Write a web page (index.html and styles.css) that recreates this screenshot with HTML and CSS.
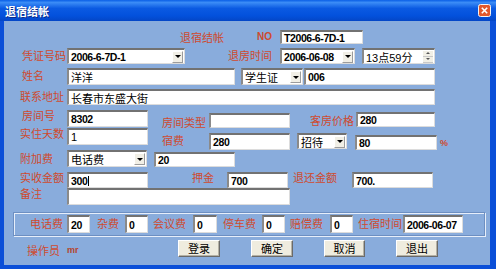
FILE: index.html
```html
<!DOCTYPE html>
<html lang="zh-CN">
<head>
  <meta charset="UTF-8">
  <title>退宿结帐</title>
  <link rel="stylesheet" href="styles.css">
</head>
<body>
  <div class="window">
    <div class="titlebar">
      <span class="title">退宿结帐</span>
      <span class="close">
        <svg width="13" height="13" viewBox="0 0 13 13">
          <rect x="0.5" y="0.5" width="12" height="12" rx="2" fill="#e2582c" stroke="#f4f4f4"/>
          <path d="M3.8 3.8 L9.2 9.2 M9.2 3.8 L3.8 9.2" stroke="#fff" stroke-width="1.6"/>
        </svg>
      </span>
    </div>

    <div class="client">
      <div class="row r0">
        <span class="lb l-head">退宿结帐</span>
        <span class="lb l-no">NO</span>
        <div class="tb num f-no">T2006-6-7D-1</div>
      </div>

      <div class="row r1">
        <span class="lb l-first">凭证号码</span>
        <div class="tb cb num f-voucher">2006-6-7D-1<span class="arrow"></span></div>
        <span class="lb l-out">退房时间</span>
        <div class="tb cb num f-date">2006-06-08<span class="arrow"></span></div>
        <div class="tb spin f-time">13点59分<span class="spinbtn"><i class="up"></i><i class="down"></i></span></div>
      </div>

      <div class="row r2">
        <span class="lb l-first">姓名</span>
        <div class="tb f-name">洋洋</div>
        <div class="tb cb f-idtype">学生证<span class="arrow"></span></div>
        <div class="tb num f-idno">006</div>
      </div>

      <div class="row r3">
        <span class="lb l-first2">联系地址</span>
        <div class="tb f-addr">长春市东盛大街</div>
      </div>

      <div class="row r4">
        <span class="lb l-first t0">房间号</span>
        <div class="tb num f-room">8302</div>
        <span class="lb l-type t6">房间类型</span>
        <div class="tb f-roomtype"></div>
        <span class="lb l-price t4">客房价格</span>
        <div class="tb num f-price">280</div>
      </div>

      <div class="row r5">
        <span class="lb l-first2 t0">实住天数</span>
        <div class="tb f-days">1</div>
        <span class="lb l-type t6">宿费</span>
        <div class="tb num f-fee">280</div>
        <div class="tb cb f-disc">招待<span class="arrow"></span></div>
        <div class="tb num f-rate">80</div>
        <span class="lb l-pct">%</span>
      </div>

      <div class="row r6">
        <span class="lb l-first2 t2">附加费</span>
        <div class="tb cb f-extra">电话费<span class="arrow"></span></div>
        <div class="tb num f-extraval">20</div>
      </div>

      <div class="row r7">
        <span class="lb l-first2 t0">实收金额</span>
        <div class="tb num f-paid">300<span class="caret"></span></div>
        <span class="lb l-deposit t0">押金</span>
        <div class="tb num f-deposit">700</div>
        <span class="lb l-refund t0">退还金额</span>
        <div class="tb num f-refund">700.</div>
      </div>

      <div class="row r8">
        <span class="lb l-first2 t0">备注</span>
        <div class="tb f-note"></div>
      </div>

      <div class="group">
        <span class="lb g-phone">电话费</span>
        <div class="tb num g-in">20</div>
        <span class="lb g-misc">杂费</span>
        <div class="tb num g-in">0</div>
        <span class="lb g-meet">会议费</span>
        <div class="tb num g-in g-wide">0</div>
        <span class="lb g-park">停车费</span>
        <div class="tb num g-in">0</div>
        <span class="lb g-comp">赔偿费</span>
        <div class="tb num g-in">0</div>
        <span class="lb g-stay">住宿时间</span>
        <div class="tb num g-date">2006-06-07</div>
      </div>

      <div class="row bottom">
        <span class="lb l-op">操作员</span>
        <span class="lb l-user">mr</span>
        <button class="btn b-login">登录</button>
        <button class="btn">确定</button>
        <button class="btn b-cancel">取消</button>
        <button class="btn">退出</button>
      </div>
    </div>
  </div>
</body>
</html>
```

FILE: styles.css
```css
* {
  box-sizing: border-box;
}

body {
  margin: 0;
  background: #fff;
  font-family: "Noto Sans CJK SC", sans-serif;
}

.window {
  width: 496px;
  height: 269px;
  background: #0b4fd8;
  display: flex;
  flex-direction: column;
}

.titlebar {
  height: 21px;
  flex: none;
  display: flex;
  align-items: center;
  background: linear-gradient(to bottom, #0a5fe6 0%, #3b8cf6 12%, #0b5ae2 40%, #0351dc 75%, #0446c6 100%);
}

.title {
  margin-left: 5px;
  color: #fff;
  font-size: 11px;
  line-height: 12px;
  font-weight: bold;
  text-shadow: 1px 1px #0a2a8a;
}

.close {
  margin-left: auto;
  margin-right: 5px;
  width: 13px;
  height: 13px;
  display: flex;
}

.client {
  flex: 1;
  margin: 0 6px 4px 4px;
  background: #89acdc;
  display: flex;
  flex-direction: column;
}

.row {
  display: flex;
  align-items: flex-start;
  flex: none;
}

.r0 { margin-top: 9px; height: 14px; }
.r1 { margin-top: 4px; height: 16px; }
.r2 { margin-top: 4px; height: 17px; }
.r3 { margin-top: 4px; height: 16px; }
.r4 { margin-top: 5px; height: 18px; }
.r5 { height: 22px; }
.r6 { height: 17px; }
.r7 { margin-top: 5px; height: 16px; }
.r8 { height: 17px; }
.bottom { margin-top: 4px; height: 17px; }

/* labels */
.lb {
  flex: none;
  margin-top: 1px;
  color: #cf4a2e;
  font-size: 11px;
  line-height: 12px;
  white-space: nowrap;
}

.t0 { margin-top: -1px; }
.t2 { margin-top: 2px; }
.t4 { margin-top: 4px; }
.t6 { margin-top: 6px; }

.l-head { margin-left: 176px; width: 77px; }
.l-no { width: 23px; font-family: "Liberation Sans", sans-serif; font-weight: bold; font-size: 10px; }
.l-first { margin-left: 18px; width: 45px; }
.l-first2 { margin-left: 16px; width: 47px; }
.l-out { margin-left: 43px; width: 52px; }
.l-type { margin-left: 14px; width: 47px; }
.l-price { margin-left: 20px; width: 46px; }
.l-pct { margin-left: 3px; margin-top: 9px; font-family: "Liberation Sans", sans-serif; font-weight: bold; font-size: 9px; }
.l-deposit { margin-left: 44px; width: 35px; }
.l-refund { margin-left: 5px; width: 59px; }
.l-op { margin-left: 23px; width: 40px; margin-top: 4px; }
.l-user { width: 111px; margin-top: 4px; font-family: "Liberation Sans", sans-serif; font-weight: bold; font-size: 9px; color: #b5442c; }

/* text boxes */
.tb {
  flex: none;
  height: 100%;
  display: flex;
  align-items: center;
  padding: 0 1px 0 2px;
  background: #fff;
  border-style: solid;
  border-width: 2px 1px 1px 2px;
  border-color: #727272 #dcdcdc #dcdcdc #8a8a8a;
  color: #000;
  font-size: 11px;
  white-space: nowrap;
  overflow: hidden;
}

.num {
  font-family: "Liberation Sans", sans-serif;
  font-weight: bold;
  font-size: 10.5px;
  letter-spacing: -0.4px;
}

.cb {
  padding-right: 1px;
}

.arrow {
  margin-left: auto;
  width: 11px;
  height: 12px;
  display: flex;
  align-items: center;
  justify-content: center;
  background: #f1efe6;
  border: 1px solid;
  border-color: #fff #9c9c9c #9c9c9c #fff;
}

.arrow::after {
  content: "";
  border-left: 3px solid transparent;
  border-right: 3px solid transparent;
  border-top: 3px solid #000;
}

.spin {
  padding-right: 1px;
  font-family: "Liberation Sans", "Noto Sans CJK SC", sans-serif;
}

.spinbtn {
  margin-left: auto;
  width: 10px;
  height: 12px;
  display: flex;
  flex-direction: column;
}

.spinbtn i {
  flex: 1;
  display: flex;
  align-items: center;
  justify-content: center;
  background: #f1efe6;
  border-bottom: 1px solid #c8c8c8;
}

.spinbtn .up::after {
  content: "";
  border-left: 2px solid transparent;
  border-right: 2px solid transparent;
  border-bottom: 2px solid #555;
}

.spinbtn .down::after {
  content: "";
  border-left: 2px solid transparent;
  border-right: 2px solid transparent;
  border-top: 2px solid #555;
}

.caret {
  width: 1px;
  height: 10px;
  margin-left: 1px;
  background: #000;
}

.f-no { width: 83px; }
.f-voucher { width: 118px; }
.f-date { width: 75px; }
.f-time { margin-left: 7px; width: 73px; }
.f-name { width: 168px; }
.f-idtype { margin-left: 6px; width: 62px; }
.f-idno { margin-left: 1px; width: 131px; }
.f-addr { width: 368px; }
.f-room { width: 81px; height: 17px; }
.f-roomtype { width: 81px; height: 15px; margin-top: 3px; }
.f-price { width: 79px; height: 15px; margin-top: 2px; }
.f-days { width: 81px; height: 17px; font-family: "Liberation Sans", sans-serif; }
.f-fee { width: 81px; height: 17px; margin-top: 5px; }
.f-disc { margin-left: 7px; width: 50px; height: 16px; margin-top: 5px; }
.f-rate { margin-left: 8px; width: 82px; height: 15px; margin-top: 7px; }
.f-extra { width: 80px; }
.f-extraval { margin-left: 7px; width: 81px; height: 15px; margin-top: 2px; }
.f-paid { width: 81px; }
.f-deposit { width: 61px; }
.f-refund { width: 81px; }
.f-note { width: 223px; }

/* fee group box */
.group {
  flex: none;
  margin: 7px 0 0 9px;
  width: 472px;
  height: 24px;
  display: flex;
  align-items: flex-start;
  border: 1px solid #6d8fc2;
  box-shadow: inset 1px 1px #e6eefa, 1px 1px #e6eefa;
}

.group .lb { margin-top: 4px; }

.g-phone { margin-left: 16px; width: 37px; }
.g-misc { margin-left: 7px; width: 28px; }
.g-meet { margin-left: 5px; width: 40px; }
.g-park { margin-left: 6px; width: 39px; }
.g-comp { margin-left: 5px; width: 40px; }
.g-stay { margin-left: 5px; width: 45px; }

.g-in { width: 23px; height: 18px; margin-top: 2px; }
.g-wide { width: 24px; }
.g-date { width: 60px; height: 18px; margin-top: 2px; }

/* buttons */
.btn {
  flex: none;
  width: 42px;
  height: 17px;
  margin: 0 0 0 31px;
  padding: 0;
  background: #efecdf;
  border: 1px solid;
  border-color: #fff #6a6a6a #6a6a6a #fff;
  box-shadow: inset -1px -1px #b4b1a5;
  color: #000;
  font-family: "Noto Sans CJK SC", sans-serif;
  font-size: 11px;
  line-height: 13px;
}

.b-login { margin-left: 0; }
.b-cancel { width: 41px; }
```
